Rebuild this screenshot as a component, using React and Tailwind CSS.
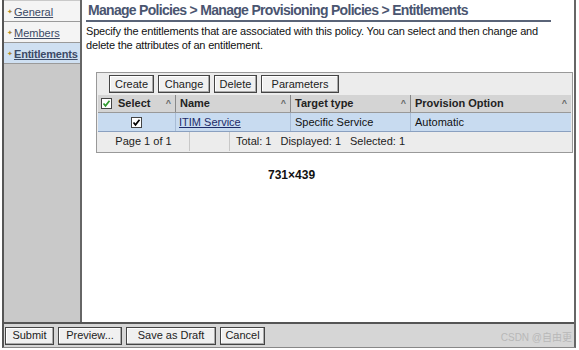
import React from "react";

const navItems = [
  { label: "General", active: false },
  { label: "Members", active: false },
  { label: "Entitlements", active: true },
];

const Caret = () => (
  <span className="text-[9px] text-[#666] leading-none">^</span>
);

const ToolButton = ({ children, w }) => (
  <button
    className={`h-[18px] ${w} border border-[#444] bg-[#f0f0f0] text-[11px] text-[#222] leading-none shadow-[inset_-1px_-1px_0_#aaa,inset_1px_1px_0_#fff]`}
  >
    {children}
  </button>
);

const CheckBox = ({ green }) => (
  <span className="inline-flex items-center justify-center w-[11px] h-[11px] border border-[#444] bg-white">
    <svg width="9" height="9" viewBox="0 0 9 9">
      <path
        d="M1.5 4.5 L3.5 6.8 L7.5 1.8"
        fill="none"
        stroke={green ? "#2f9a2f" : "#000"}
        strokeWidth="1.7"
      />
    </svg>
  </span>
);

export default function App() {
  return (
    <div
      className="w-[579px] h-[350px] bg-white overflow-hidden"
      style={{ fontFamily: '"Liberation Sans", Arial, sans-serif' }}
    >
      <div className="ml-[2px] w-[574px] h-[348px] border-l-2 border-r-2 border-b border-l-[#555] border-r-[#666] border-b-[#888] flex flex-col">
        <div className="flex flex-1 min-h-0">
          {/* Sidebar */}
          <div className="w-[78px] bg-[#c9c9c9] border-r-2 border-[#666] flex flex-col pt-[1px]">
            {navItems.map((item) => (
              <div
                key={item.label}
                className={`h-[21px] flex items-center pl-[3px] pt-[2px] border-b border-[#9a9a9a] whitespace-nowrap ${
                  item.active ? "bg-[#cfe0f2]" : "bg-[#f4f4f4]"
                }`}
              >
                <span className="text-[#b08a2a] text-[7px] mr-[1px]">✦</span>
                <span
                  className={`text-[11px] underline text-[#3c4a66] ${
                    item.active ? "font-bold tracking-[-0.2px]" : ""
                  }`}
                >
                  {item.label}
                </span>
              </div>
            ))}
          </div>

          {/* Main */}
          <div className="flex-1 bg-white pl-[4px] pr-[1px]">
            <div className="mr-[22px] border-b-2 border-[#5a6478] pl-[2px] pt-[2px] pb-[1px]">
              <h1 className="text-[14px] font-bold text-[#4a5570] leading-[17px] tracking-[-0.7px]">
                Manage Policies &gt; Manage Provisioning Policies &gt; Entitlements
              </h1>
            </div>
            <p className="w-[470px] text-[11px] leading-[14px] tracking-[-0.18px] text-[#111] mt-[2px]">
              Specify the entitlements that are associated with this policy. You can select and then change and delete the attributes of an entitlement.
            </p>

            {/* Table */}
            <div className="mt-[20px] ml-[10px] border border-[#999] bg-[#ececec] p-[1px]">
              <div className="flex gap-[4px] pl-[11px] pt-[1px] pb-[1px]">
                <ToolButton w="w-[45px]">Create</ToolButton>
                <ToolButton w="w-[52px]">Change</ToolButton>
                <ToolButton w="w-[43px]">Delete</ToolButton>
                <ToolButton w="w-[78px]">Parameters</ToolButton>
              </div>
              <div className="mt-[1px] flex h-[18px] bg-[#d4d4d4] text-[11px] font-bold text-[#222] border-b border-[#999]">
                <div className="w-[78px] flex items-center pl-[3px] pr-[4px] border-r border-[#888]">
                  <CheckBox green />
                  <span className="ml-[6px] flex-1">Select</span>
                  <Caret />
                </div>
                <div className="w-[115px] flex items-center pl-[4px] pr-[4px] border-r border-[#888]">
                  <span className="flex-1">Name</span>
                  <Caret />
                </div>
                <div className="w-[120px] flex items-center pl-[4px] pr-[4px] border-r border-[#888]">
                  <span className="flex-1">Target type</span>
                  <Caret />
                </div>
                <div className="flex-1 flex items-center pl-[4px] pr-[4px]">
                  <span className="flex-1">Provision Option</span>
                  <Caret />
                </div>
              </div>
              <div className="flex h-[19px] bg-[#c8dbf0] text-[11px] text-[#111] border-b border-[#8aa0c0]">
                <div className="w-[78px] flex items-center justify-center border-r border-[#a8bcd6]">
                  <CheckBox />
                </div>
                <div className="w-[115px] flex items-center pl-[3px] border-r border-[#a8bcd6]">
                  <span className="underline text-[#1d2c6a]">ITIM Service</span>
                </div>
                <div className="w-[120px] flex items-center pl-[4px] border-r border-[#a8bcd6]">
                  Specific Service
                </div>
                <div className="flex-1 flex items-center pl-[4px]">Automatic</div>
              </div>
              <div className="flex h-[19px] text-[11px] text-[#222] bg-[#ececec]">
                <div className="w-[92px] flex items-center justify-center border-r border-[#c8c8c8]">
                  Page 1 of 1
                </div>
                <div className="w-[40px] border-r border-[#c8c8c8]" />
                <div className="flex items-center pl-[6px] gap-[9px]">
                  <span>Total: 1</span>
                  <span>Displayed: 1</span>
                  <span>Selected: 1</span>
                </div>
              </div>
            </div>

            <div className="mt-[13px] pl-[182px] text-[12px] font-bold text-[#111]">
              731×439
            </div>
          </div>
        </div>

        {/* Bottom bar */}
        <div className="h-[25px] border-t-2 border-[#555] bg-[#d6d6d6] flex items-center pl-[1px] gap-[4px] relative">
          <ToolButton w="w-[49px]">Submit</ToolButton>
          <ToolButton w="w-[64px]">Preview...</ToolButton>
          <ToolButton w="w-[90px]">Save as Draft</ToolButton>
          <ToolButton w="w-[45px]">Cancel</ToolButton>
          <span
            className="absolute right-[2px] top-[6px] text-[10px] text-[#b8b8b8]"
            style={{ fontFamily: '"Liberation Sans", "Noto Sans CJK SC", sans-serif' }}
          >
            CSDN @自由更
          </span>
        </div>
      </div>
    </div>
  );
}
